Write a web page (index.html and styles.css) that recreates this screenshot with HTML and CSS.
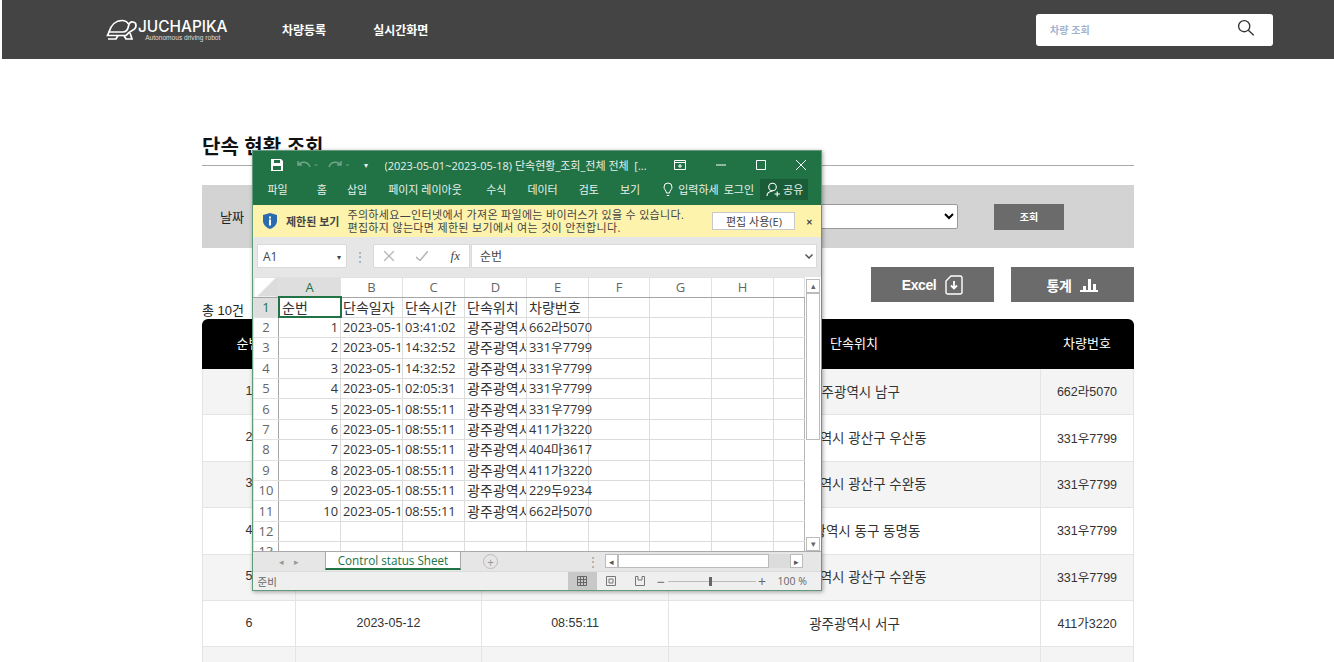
FILE: index.html
```html
<!DOCTYPE html>
<html>

<head>
    <title>단속 현황 조회</title>
    <link rel="stylesheet" href="styles.css">
</head>

<body>
    <header class="topbar">
        <div class="logo">
            <svg class="logo-mark" viewBox="0 0 32 22" width="32" height="22" fill="none" stroke="#fff" stroke-width="1.7">
                <path d="M3 13 C5 6 10 1.5 16 1.5 C19 1.5 21 2.5 22.5 5" />
                <path d="M3 13 L1.5 16.5 L20 16.5 C22 14 24 12.5 27 11 C31 9 31 3.5 27 3 C24.5 2.7 23 4.5 22.5 7 C22 10 20 13 17 13 Z" />
                <path d="M2 20 L10 20 L12 16.5 M18 16.5 L20 20 L26 20 L24 14" />
            </svg>
            <div class="logo-text">
                <span class="logo-name">JUCHAPIKA</span>
                <span class="logo-sub">Autonomous driving robot</span>
            </div>
        </div>
        <nav class="nav">
            <a>차량등록</a>
            <a>실시간화면</a>
        </nav>
        <div class="search">
            <span>차량 조회</span>
            <svg viewBox="0 0 20 20" width="18" height="18" fill="none" stroke="#333" stroke-width="1.5">
                <circle cx="8" cy="8" r="6.2" />
                <path d="M12.6 12.6 L18.6 18" />
            </svg>
        </div>
    </header>

    <main class="content">
        <h2 class="page-title">단속 현황 조회</h2>

        <div class="filter">
            <label>날짜</label>
            <select class="filter-select">
                <option></option>
            </select>
            <button class="filter-button">조회</button>
        </div>

        <div class="actions">
            <button class="action-button">Excel
                <svg viewBox="0 0 18 20" width="18" height="20" fill="none" stroke="#fff" stroke-width="1.4">
                    <path d="M6 1 H15 Q17 1 17 3 V17 Q17 19 15 19 H3 Q1 19 1 17 V6 Z" />
                    <path d="M9 6 V13 M6 10.5 L9 13.5 L12 10.5" stroke-width="1.8" />
                </svg>
            </button>
            <button class="action-button">통계
                <svg viewBox="0 0 18 14" width="18" height="14" fill="#fff">
                    <rect x="0" y="12" width="18" height="2" />
                    <rect x="3" y="8" width="3" height="4" />
                    <rect x="8" y="1" width="3" height="11" />
                    <rect x="13" y="6" width="3" height="6" />
                </svg>
            </button>
        </div>

        <div class="total">총 10건</div>

        <table class="list">
            <thead>
                <tr>
                    <th class="col-no">순번</th>
                    <th class="col-date">단속일자</th>
                    <th class="col-time">단속시간</th>
                    <th>단속위치</th>
                    <th class="col-car">차량번호</th>
                </tr>
            </thead>
            <tbody>
                <tr><td>1</td><td>2023-05-18</td><td>03:41:02</td><td>광주광역시 남구</td><td>662라5070</td></tr>
                <tr><td>2</td><td>2023-05-16</td><td>14:32:52</td><td>광주광역시 광산구 우산동</td><td>331우7799</td></tr>
                <tr><td>3</td><td>2023-05-16</td><td>14:32:52</td><td>광주광역시 광산구 수완동</td><td>331우7799</td></tr>
                <tr><td>4</td><td>2023-05-15</td><td>02:05:31</td><td>광주광역시 동구 동명동</td><td>331우7799</td></tr>
                <tr><td>5</td><td>2023-05-12</td><td>08:55:11</td><td>광주광역시 광산구 수완동</td><td>331우7799</td></tr>
                <tr><td>6</td><td>2023-05-12</td><td>08:55:11</td><td>광주광역시 서구</td><td>411가3220</td></tr>
                <tr><td>7</td><td>2023-05-12</td><td>08:55:11</td><td>광주광역시 서구</td><td>404마3617</td></tr>
            </tbody>
        </table>
    </main>

    <!-- screenshot has an excel window sitting over the page -->
    <div class="xl">
        <div class="xl-title">
            <svg class="xl-save" viewBox="0 0 12 12" width="12" height="12" fill="#fff">
                <path d="M0 0 H10 L12 2 V12 H0 Z M3 1 V4 H9 V1 Z M2 7 V11 H10 V7 Z" fill-rule="evenodd" />
            </svg>
            <svg class="xl-undo" viewBox="0 0 60 12" width="60" height="12" fill="none" stroke="#6fa488" stroke-width="1.5">
                <path d="M1 2 V6 H5 M1 6 C4 2 11 2 13 8" />
                <path d="M17.5 6 H20.5" stroke-width="1" />
                <path d="M44 2 V6 H40 M44 6 C41 2 34 2 32 8" />
                <path d="M49 6 H52" stroke-width="1" />
            </svg>
            <span class="xl-qat">&#9662;</span>
            <span class="xl-doc">(2023-05-01~2023-05-18) 단속현황_조회_전체 전체 &nbsp;[...</span>
            <svg class="xl-ctl xl-ctl-first" viewBox="0 0 12 10" width="12" height="10" fill="none" stroke="#fff">
                <path d="M.5 .5 H11.5 V9.5 H.5 Z M.5 2.5 H11.5 M6 4 V8 M4 6 H8" />
            </svg>
            <svg class="xl-ctl" viewBox="0 0 10 10" width="10" height="10" stroke="#fff"><path d="M0 5 H10" /></svg>
            <svg class="xl-ctl" viewBox="0 0 10 10" width="10" height="10" fill="none" stroke="#fff"><path d="M.5 .5 H9.5 V9.5 H.5 Z" /></svg>
            <svg class="xl-ctl" viewBox="0 0 10 10" width="10" height="10" stroke="#fff"><path d="M0 0 L10 10 M10 0 L0 10" /></svg>
        </div>
        <div class="xl-ribbon">
            <span class="tab-file">파일</span>
            <span class="tab-home">홈</span>
            <span class="tab-insert">삽입</span>
            <span class="tab-page">페이지 레이아웃</span>
            <span class="tab-formula">수식</span>
            <span class="tab-data">데이터</span>
            <span class="tab-review">검토</span>
            <span class="tab-view">보기</span>
            <svg class="xl-bulb" viewBox="0 0 10 15" width="10" height="15" fill="none" stroke="#fff">
                <path d="M3.5 11 C3 8 1 7.5 1 5 A4 4 0 0 1 9 5 C9 7.5 7 8 6.5 11 Z M3.8 13.5 H6.2" />
            </svg>
            <span class="tab-tell">입력하세</span>
            <span class="tab-login">로그인</span>
            <span class="xl-share">
                <svg viewBox="0 0 14 15" width="14" height="15" fill="none" stroke="#fff" stroke-width="1.1">
                    <circle cx="6.5" cy="5" r="3.8" />
                    <path d="M1 14 C1 11 3 9.5 6.5 9 M8.5 12 H14 M11.2 9.5 V14.5" />
                </svg>
                공유
            </span>
        </div>
        <div class="xl-warn">
            <svg viewBox="0 0 14 16" width="14" height="16">
                <path d="M7 0 L14 2 V8 C14 12 10 15 7 16 C4 15 0 12 0 8 V2 Z" fill="#2b6cb0" />
                <rect x="6" y="6.5" width="2" height="6" fill="#fff" />
                <rect x="6" y="3.5" width="2" height="2" fill="#fff" />
            </svg>
            <b>제한된 보기</b>
            <p>주의하세요—인터넷에서 가져온 파일에는 바이러스가 있을 수 있습니다.<br>편집하지 않는다면 제한된 보기에서 여는 것이 안전합니다.</p>
            <button class="xl-enable">편집 사용(E)</button>
            <span class="xl-warn-close">&#10005;</span>
        </div>
        <div class="xl-formula">
            <div class="xl-namebox">A1<i>&#9662;</i></div>
            <span class="xl-dots">&#8942;</span>
            <div class="xl-fx">
                <svg viewBox="0 0 10 10" width="10" height="10" stroke="#b5b5b5" stroke-width="1.3"><path d="M0 0 L10 10 M10 0 L0 10" /></svg>
                <svg viewBox="0 0 12 10" width="12" height="10" fill="none" stroke="#b5b5b5" stroke-width="1.5"><path d="M0 6 L4 9.5 L12 0" /></svg>
                <em>fx</em>
            </div>
            <div class="xl-input">순번
                <svg viewBox="0 0 8 5" width="8" height="5" fill="none" stroke="#555" stroke-width="1.5"><path d="M.5 .5 L4 4 L7.5 .5" /></svg>
            </div>
        </div>
        <div class="xl-sheet">
            <table class="grid">
                <colgroup>
                    <col class="g-head"><col class="g-a"><col class="g-c"><col class="g-c"><col class="g-c"><col class="g-c"><col class="g-f"><col class="g-c"><col class="g-c"><col class="g-i">
                </colgroup>
                <thead>
                    <tr>
                        <th class="corner"></th>
                        <th class="sel">A</th><th>B</th><th>C</th><th>D</th><th>E</th><th>F</th><th>G</th><th>H</th><th></th>
                    </tr>
                </thead>
                <tbody>
                    <tr class="ko"><th class="sel">1</th><td class="active">순번</td><td>단속일자</td><td>단속시간</td><td>단속위치</td><td>차량번호</td><td></td><td></td><td></td><td></td></tr>
                    <tr><th>2</th><td class="num">1</td><td>2023-05-18</td><td>03:41:02</td><td class="place">광주광역시 남구</td><td>662라5070</td><td></td><td></td><td></td><td></td></tr>
                    <tr><th>3</th><td class="num">2</td><td>2023-05-16</td><td>14:32:52</td><td class="place">광주광역시 광산구</td><td>331우7799</td><td></td><td></td><td></td><td></td></tr>
                    <tr><th>4</th><td class="num">3</td><td>2023-05-16</td><td>14:32:52</td><td class="place">광주광역시 광산구</td><td>331우7799</td><td></td><td></td><td></td><td></td></tr>
                    <tr><th>5</th><td class="num">4</td><td>2023-05-15</td><td>02:05:31</td><td class="place">광주광역시 동구</td><td>331우7799</td><td></td><td></td><td></td><td></td></tr>
                    <tr><th>6</th><td class="num">5</td><td>2023-05-12</td><td>08:55:11</td><td class="place">광주광역시 광산구</td><td>331우7799</td><td></td><td></td><td></td><td></td></tr>
                    <tr><th>7</th><td class="num">6</td><td>2023-05-12</td><td>08:55:11</td><td class="place">광주광역시 서구</td><td>411가3220</td><td></td><td></td><td></td><td></td></tr>
                    <tr><th>8</th><td class="num">7</td><td>2023-05-12</td><td>08:55:11</td><td class="place">광주광역시 서구</td><td>404마3617</td><td></td><td></td><td></td><td></td></tr>
                    <tr><th>9</th><td class="num">8</td><td>2023-05-12</td><td>08:55:11</td><td class="place">광주광역시 서구</td><td>411가3220</td><td></td><td></td><td></td><td></td></tr>
                    <tr><th>10</th><td class="num">9</td><td>2023-05-12</td><td>08:55:11</td><td class="place">광주광역시 서구</td><td>229두9234</td><td></td><td></td><td></td><td></td></tr>
                    <tr><th>11</th><td class="num">10</td><td>2023-05-12</td><td>08:55:11</td><td class="place">광주광역시 서구</td><td>662라5070</td><td></td><td></td><td></td><td></td></tr>
                    <tr><th>12</th><td></td><td></td><td></td><td></td><td></td><td></td><td></td><td></td><td></td></tr>
                    <tr><th>13</th><td></td><td></td><td></td><td></td><td></td><td></td><td></td><td></td><td></td></tr>
                </tbody>
            </table>
            <div class="xl-vscroll">
                <span class="arrow">&#9652;</span>
                <span class="thumb"></span>
                <span class="arrow">&#9662;</span>
            </div>
        </div>
        <div class="xl-tabs">
            <span class="tab-nav">&#9666; &nbsp; &nbsp;&#9656;</span>
            <span class="sheet-tab">Control status Sheet</span>
            <span class="add-sheet">+</span>
            <span class="xl-dots">&#8942;</span>
            <div class="xl-hscroll">
                <span class="arrow">&#9666;</span>
                <span class="thumb"></span>
                <span class="arrow">&#9656;</span>
            </div>
        </div>
        <div class="xl-status">
            <span class="ready">준비</span>
            <span class="view on">
                <svg viewBox="0 0 10 10" width="10" height="10" fill="none" stroke="#666"><path d="M.5 .5 H9.5 V9.5 H.5 Z M3.5 .5 V9.5 M6.5 .5 V9.5 M.5 3.5 H9.5 M.5 6.5 H9.5" /></svg>
            </span>
            <span class="view">
                <svg viewBox="0 0 10 10" width="10" height="10" fill="none" stroke="#777"><path d="M.5 .5 H9.5 V9.5 H.5 Z M3 3 H7 V7 H3 Z" /></svg>
            </span>
            <span class="view">
                <svg viewBox="0 0 10 10" width="10" height="10" fill="none" stroke="#777"><path d="M.5 .5 H3 V4 H7 V.5 H9.5 V9.5 H.5 Z" /></svg>
            </span>
            <span class="zoom-sign">&minus;</span>
            <span class="zoom-track"><i></i></span>
            <span class="zoom-sign">+</span>
            <span class="zoom-value">100 %</span>
        </div>
    </div>
</body>

</html>
```

FILE: styles.css
```css
html {
    overflow: hidden;
}

body {
    margin: 0;
    padding: 0;
    font-family: "Liberation Sans", "Noto Sans CJK KR", sans-serif;
    color: #222;
    background-color: #fff;
}

.topbar {
    display: flex;
    align-items: center;
    height: 59px;
    margin-left: 2px;
    background-color: #444;
    box-sizing: border-box;
    padding-left: 104px;
}

.logo {
    display: flex;
    align-items: center;
    width: 176px;
    color: #fff;
}

.logo-name {
    font-family: Inter, sans-serif;
    font-size: 15.4px;
    font-weight: 500;
    line-height: 15px;
}

.logo-text {
    display: flex;
    flex-direction: column;
    align-items: center;
}

.logo-sub {
    font-size: 6.6px;
    line-height: 7px;
    color: #ddd;
}

.nav {
    display: flex;
    gap: 47px;
}

.nav a {
    color: #fff;
    font-size: 12px;
    font-weight: 700;
}

.search {
    display: flex;
    align-items: center;
    justify-content: space-between;
    width: 237px;
    height: 32px;
    margin-left: auto;
    margin-right: 61px;
    padding: 0 18px 0 14px;
    box-sizing: border-box;
    background-color: #fff;
    border-radius: 3px;
    font-size: 10px;
    font-weight: 700;
    color: #9fb3cf;
}

.search svg {
    margin-top: -3px;
}

.content {
    width: 932px;
    margin-left: 202px;
    padding-top: 73px;
}

.page-title {
    margin: 0;
    height: 33px;
    font-size: 20px;
    line-height: 30px;
    font-weight: 700;
    color: #111;
    border-bottom: 1px solid #aaa;
}

.filter {
    display: flex;
    align-items: center;
    height: 63px;
    margin-top: 19px;
    padding: 0 70px 0 18px;
    background-color: #d3d3d3;
    font-size: 13px;
}

.filter-select {
    width: 300px;
    height: 25px;
    margin-left: auto;
    background-color: #fff;
    border: 1px solid #999;
    border-radius: 2px;
}

.filter-button {
    width: 70px;
    height: 26px;
    margin-left: 36px;
    background-color: #6b6b6b;
    color: #fff;
    border: none;
    font-size: 10px;
    font-weight: 700;
    font-family: inherit;
}

.actions {
    display: flex;
    justify-content: flex-end;
    gap: 17px;
    margin-top: 19px;
}

.action-button {
    display: flex;
    align-items: center;
    justify-content: center;
    gap: 9px;
    width: 123px;
    height: 35px;
    background-color: #6b6b6b;
    color: #fff;
    border: none;
    font-family: inherit;
    font-size: 14px;
    font-weight: 700;
    letter-spacing: -0.4px;
}

.total {
    height: 17px;
    font-size: 13px;
    line-height: 17px;
}

.list {
    width: 932px;
    border-collapse: separate;
    border-spacing: 0;
    table-layout: fixed;
    font-size: 12.5px;
}

.list th {
    height: 47px;
    padding: 0 0 3px;
    background-color: #000;
    color: #fff;
    font-size: 13px;
    font-weight: 400;
}

.list th:last-child {
    border-top-right-radius: 6px;
}

.list th:first-child {
    border-top-left-radius: 6px;
}

.col-no {
    width: 93px;
}

.col-date {
    width: 186px;
}

.col-time {
    width: 187px;
}

.col-car {
    width: 94px;
}

.list td {
    height: 43.4px;
    padding: 0 0 2px;
    text-align: center;
    color: #333;
    border-bottom: 1px solid #e4e4e4;
    border-left: 1px solid #e4e4e4;
}

.list td:nth-child(4) {
    font-size: 13.5px;
}

.list td:last-child {
    border-right: 1px solid #e4e4e4;
}

.list tbody tr:nth-child(odd) td {
    background-color: #f4f4f4;
}

/* excel window */
.xl {
    position: absolute;
    left: 252px;
    top: 150px;
    width: 570px;
    height: 441px;
    box-sizing: border-box;
    border: 1.5px solid #5f9b7c;
    background-color: #e6e6e6;
    box-shadow: 1px 1px 4px rgba(0, 0, 0, 0.35);
    font-family: "Open Sans", "Noto Sans CJK KR", sans-serif;
    display: flex;
    flex-direction: column;
    overflow: hidden;
}

.xl-title {
    display: flex;
    align-items: center;
    height: 26px;
    flex: none;
    box-sizing: border-box;
    padding: 1px 0 0 17.5px;
    background-color: #217346;
    color: #e8f0ec;
    font-size: 11px;
}

.xl-undo {
    margin-left: 14px;
}

.xl-qat {
    margin-left: 7px;
    font-size: 8px;
}

.xl-doc {
    margin-left: 17px;
    width: 282px;
    white-space: nowrap;
    overflow: hidden;
}

.xl-ctl {
    flex: none;
    margin-left: 30px;
}

.xl-ctl-first {
    margin-left: 7px;
}

.xl-ribbon {
    display: flex;
    align-items: center;
    height: 28px;
    flex: none;
    box-sizing: border-box;
    background-color: #217346;
    color: #e8f0ec;
    font-size: 11px;
    white-space: nowrap;
    padding: 0 0 4px 14.5px;
}

.xl-ribbon > span {
    flex: none;
}

.tab-home {
    margin-left: 29px;
}

.tab-insert {
    margin-left: 20px;
}

.tab-page {
    margin-left: 21px;
    width: 77px;
}

.tab-formula,
.tab-data,
.tab-review,
.tab-view {
    margin-left: 21px;
}

.xl-bulb {
    margin-left: 23px;
}

.tab-tell {
    margin-left: 5px;
}

.tab-login {
    margin-left: 5px;
}

.xl-share {
    display: flex;
    align-items: center;
    gap: 3px;
    height: 21px;
    margin-left: 6px;
    padding: 0 5px 0 6px;
    background-color: #1a5c38;
}

.xl-warn {
    display: flex;
    align-items: center;
    height: 32px;
    flex: none;
    padding-left: 10px;
    background-color: #fdf3ac;
    color: #444;
    font-size: 11px;
    line-height: 13px;
}

.xl-warn svg {
    flex: none;
}

.xl-warn b {
    margin-left: 9px;
    font-weight: 700;
    flex: none;
}

.xl-warn p {
    margin: 0 0 0 8px;
    width: 365px;
    flex: none;
    white-space: nowrap;
    letter-spacing: 0.33px;
}

.xl-enable {
    width: 83px;
    height: 18px;
    padding: 0;
    flex: none;
    background-color: #fff;
    border: 1px solid #c8c8c8;
    color: #444;
    font-family: inherit;
    font-size: 11px;
}

.xl-warn-close {
    margin-left: 11px;
    font-size: 8px;
    font-weight: 700;
}

.xl-formula {
    display: flex;
    align-items: center;
    height: 39.5px;
    flex: none;
    padding: 0 4px 1px;
    box-sizing: border-box;
    font-size: 12px;
    color: #444;
    background-color: #e6e6e6;
}

.xl-namebox {
    display: flex;
    align-items: center;
    justify-content: space-between;
    width: 90px;
    height: 24px;
    padding: 0 5px;
    box-sizing: border-box;
    background-color: #fff;
    border: 1px solid #dadada;
}

.xl-namebox i {
    font-style: normal;
    font-size: 8px;
}

.xl-dots {
    width: 26px;
    text-align: center;
    color: #999;
    font-size: 12px;
}

.xl-fx {
    display: flex;
    align-items: center;
    justify-content: space-between;
    width: 97px;
    height: 24px;
    padding: 0 9px 0 10px;
    box-sizing: border-box;
    background-color: #fff;
    border: 1px solid #dadada;
}

.xl-fx em {
    font-family: "Liberation Serif", serif;
    font-size: 13px;
}

.xl-input {
    display: flex;
    align-items: center;
    justify-content: space-between;
    flex: 1;
    height: 24px;
    margin-left: 1px;
    padding: 0 3px 0 8px;
    box-sizing: border-box;
    background-color: #fff;
    border: 1px solid #dadada;
}

.xl-sheet {
    display: flex;
    align-items: flex-start;
    height: 274px;
    flex: none;
    background-color: #fff;
    overflow: hidden;
}

.grid {
    width: 551px;
    table-layout: fixed;
    border-collapse: collapse;
    font-size: 12.8px;
    line-height: 15px;
    color: #333;
    flex: none;
}

.g-head {
    width: 25px;
}

.g-a,
.g-c {
    width: 62px;
}

.g-f {
    width: 61px;
}

.g-i {
    width: 31px;
}

.grid th {
    height: 19.4px;
    padding: 0;
    font-weight: 400;
    font-size: 13px;
    color: #666;
    text-align: center;
    background-color: #fff;
    border: 1px solid #e1e1e1;
}

.grid thead th {
    height: 19px;
    border-bottom: 1px solid #a5a5a5;
}

.grid tbody th {
    border-right: 1px solid #a5a5a5;
}

.grid th.sel {
    background-color: #dedede;
    color: #217346;
}

.corner {
    background: linear-gradient(135deg, #fff 50%, #dcdcdc 50%) !important;
}

.grid td {
    height: 19.4px;
    padding: 0 0 0 2px;
    border: 1px solid #dcdcdc;
    white-space: nowrap;
    overflow: hidden;
    color: #333;
}

.grid td:nth-child(6) {
    overflow: visible;
}

.grid td:last-child {
    border-right: 1px solid #b5b5b5;
}

.grid .ko td,
.grid td.place {
    font-size: 14px;
}

.grid td.num {
    text-align: right;
    padding: 0 2px 0 0;
}

.grid td.active {
    outline: 2px solid #217346;
    outline-offset: -1px;
    padding-left: 3px;
}

.xl-vscroll {
    display: flex;
    flex-direction: column;
    flex: none;
    width: 14px;
    height: 274px;
    margin-left: 1px;
    padding-top: 2px;
    box-sizing: border-box;
    font-size: 9px;
    color: #666;
    text-align: center;
}

.xl-vscroll .arrow {
    height: 14px;
    line-height: 12px;
    background-color: #fff;
    border: 1px solid #bbb;
    box-sizing: border-box;
}

.xl-vscroll .thumb {
    flex: none;
    height: 147px;
    background-color: #fff;
    border: 1px solid #bbb;
    box-sizing: border-box;
}

.xl-vscroll .arrow:last-child {
    margin-top: auto;
}

.xl-tabs {
    display: flex;
    align-items: center;
    height: 20px;
    flex: none;
    background-color: #e6e6e6;
    border-top: 1px solid #aaa;
    box-sizing: border-box;
    font-size: 11.7px;
    color: #999;
}

.tab-nav {
    width: 72px;
    text-align: center;
    font-size: 9px;
}

.sheet-tab {
    width: 136px;
    height: 18px;
    line-height: 17px;
    margin-top: -1px;
    text-align: center;
    box-sizing: border-box;
    background-color: #fff;
    color: #217346;
    border-bottom: 2px solid #217346;
    border-left: 1px solid #aaa;
    border-right: 1px solid #aaa;
    white-space: nowrap;
}

.add-sheet {
    width: 15px;
    height: 15px;
    margin-left: 22px;
    line-height: 14px;
    text-align: center;
    border: 1px solid #bbb;
    border-radius: 50%;
    box-sizing: border-box;
}

.xl-tabs .xl-dots {
    margin-left: 82px;
}

.xl-hscroll {
    display: flex;
    align-items: center;
    flex: none;
    width: 198px;
    height: 14px;
    margin-left: -1px;
    background-color: #dcdcdc;
    color: #555;
    font-size: 9px;
}

.xl-hscroll .arrow {
    width: 13px;
    height: 14px;
    line-height: 13px;
    text-align: center;
    background-color: #fff;
    border: 1px solid #bbb;
    box-sizing: border-box;
}

.xl-hscroll .thumb {
    width: 151px;
    height: 14px;
    background-color: #fff;
    border: 1px solid #bbb;
    box-sizing: border-box;
}

.xl-hscroll .arrow:last-child {
    margin-left: auto;
}

.xl-status {
    display: flex;
    align-items: center;
    flex: 1;
    border-top: 1px solid #dcdcdc;
    background-color: #efefef;
    font-size: 10.5px;
    color: #666;
    padding-left: 4.5px;
}

.ready {
    width: 310px;
}

.view {
    display: flex;
    align-items: center;
    justify-content: center;
    width: 29px;
    height: 100%;
}

.view.on {
    background-color: #c8c8c8;
}

.zoom-sign {
    width: 9px;
    margin-left: 2px;
    font-size: 14px;
    text-align: center;
}

.zoom-track {
    position: relative;
    width: 88px;
    height: 1px;
    margin-left: 2px;
    background-color: #bbb;
}

.zoom-track i {
    position: absolute;
    left: 41px;
    top: -4px;
    width: 3px;
    height: 9px;
    background-color: #666;
}

.zoom-value {
    margin-left: 11px;
    white-space: nowrap;
}
```
